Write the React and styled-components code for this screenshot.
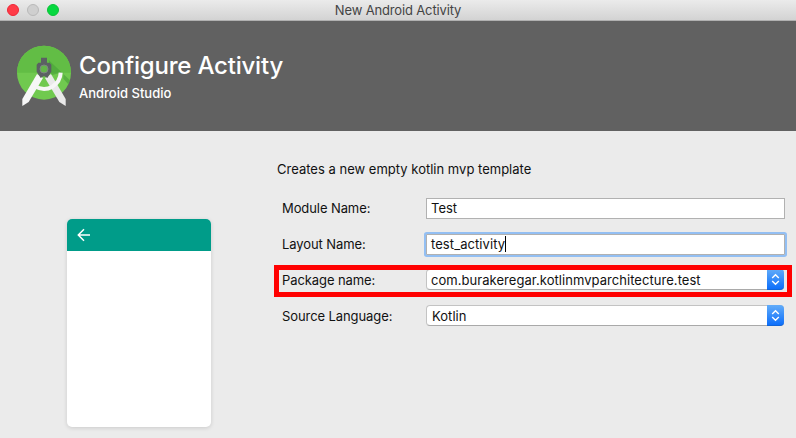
import React from "react";
import styled, { createGlobalStyle } from "styled-components";

const GlobalStyle = createGlobalStyle`
  * { box-sizing: border-box; }
  body { margin: 0; background: #ebebeb; overflow: hidden; }
`;

const Window = styled.div`
  width: 796px;
  height: 438px;
  overflow: hidden;
  background: #ebebeb;
  color: #111;
  font: 13px/20px Inter, "Liberation Sans", sans-serif;
  white-space: nowrap;
`;

const TitleBar = styled.header`
  height: 21px;
  display: grid;
  grid-template-columns: 72px 1fr 72px;
  align-items: center;
  background: linear-gradient(#ebebeb, #d3d3d3);
  border-bottom: 1px solid #b0b0b0;
`;

const Lights = styled.div`
  display: flex;
  gap: 8px;
  padding-left: 7px;
`;

const Light = styled.span`
  width: 12px;
  height: 12px;
  border-radius: 50%;
  background: ${(p) => p.$fill};
  border: 1px solid ${(p) => p.$edge};
`;

const WindowTitle = styled.div`
  text-align: center;
  color: #444;
  letter-spacing: -0.15px;
`;

const Banner = styled.div`
  height: 110px;
  padding: 17px 0 0 8px;
  display: flex;
  background: #616161;
  color: #fff;
`;

const Logo = styled.svg`
  width: 80px;
  height: 76px;
  margin-right: -9px;
  flex: none;
`;

const Heading = styled.h1`
  margin: 12px 0 0;
  font-size: 24px;
  line-height: 32px;
  font-weight: 500;
  letter-spacing: -0.2px;
`;

const Subheading = styled.div`
  font-weight: 500;
  line-height: 20px;
  margin-top: 1px;
`;

const Body = styled.main`
  display: flex;
  padding: 28px 0 0 67px;
`;

const Phone = styled.div`
  width: 144px;
  height: 208px;
  margin: 60px 66px 0 0;
  border-radius: 5px;
  overflow: hidden;
  background: #fff;
  box-shadow: 0 1px 4px rgba(0, 0, 0, 0.14);
`;

const PhoneBar = styled.div`
  height: 32px;
  padding: 9px 0 0 10px;
  background: #009c89;
  svg { display: block; }
`;

const Form = styled.div`
  width: 519px;
`;

const Description = styled.p`
  margin: 0;
  letter-spacing: 0.01px;
`;

const Row = styled.div`
  position: relative;
  height: 36px;
  padding-left: 5px;
  display: grid;
  grid-template-columns: 144px 359px;
  align-items: center;
`;

const Rows = styled.div`
  padding-top: 12px;
`;

const Label = styled.label`
  margin-bottom: 2px;
  letter-spacing: -0.09px;
`;

const TextField = styled.div`
  height: 21px;
  margin-bottom: 1px;
  display: flex;
  align-items: center;
  padding: 0 0 1px 4px;
  line-height: 18px;
  background: #fff;
  border: 1px solid #b1b1b1;
  border-radius: ${(p) => (p.$focused ? "1px" : "0")};
  box-shadow: ${(p) => (p.$focused ? "0 0 0 2px #93bff3" : "none")};
  letter-spacing: ${(p) => (p.$focused ? "0.08px" : "0")};
`;

const Caret = styled.span`
  width: 1px;
  height: 16px;
  background: #000;
`;

const Combo = styled.div`
  width: 358px;
  height: 21px;
  margin-bottom: 3px;
  display: flex;
  align-items: stretch;
  background: #fff;
  border: 1px solid #c3c3c3;
  border-bottom-color: #a9a9a9;
  border-radius: 4px;
`;

const ComboValue = styled.span`
  flex: 1;
  padding-left: ${(p) => p.$inset};
  line-height: 20px;
  letter-spacing: 0.05px;
`;

const Stepper = styled.span`
  width: 17px;
  margin: -1px;
  flex: none;
  display: flex;
  align-items: center;
  justify-content: center;
  background: linear-gradient(#62acf9, #0d6ffb);
  border-radius: 0 4px 4px 0;
  border-bottom: 1px solid #1064d8;
`;

const Highlight = styled.div`
  position: absolute;
  left: -3px;
  top: 2px;
  width: 518px;
  height: 32px;
  border: 5px solid #f00;
`;

function StudioLogo() {
  return (
    <Logo viewBox="0 0 240 228">
      <defs>
        <clipPath id="disc"><circle cx="108" cy="104" r="81" /></clipPath>
      </defs>
      <circle cx="108" cy="104" r="81" fill="#70c94f" />
      <g clipPath="url(#disc)">
        <path d="M20 20H200V104H20Z" fill="#62bd45" />
        <path d="M122 66L200 140V160L166 122V104H158L130 112Z" fill="#46a038" opacity=".6" />
      </g>
      <path d="M87 108L105 120L62 192L43 204L43 183Z" fill="#f7f7f7" />
      <path d="M129 108L111 120L154 192L173 204L173 183Z" fill="#e9e9e9" />
      <path d="M80 145Q108 160 133 146Q157 131 158 104" fill="none" stroke="#f6f6f6" strokeWidth="12" />
      <path d="M99 59H117V74H125L130 80V101L118 120L108 114L98 120L86 101V80L91 74H99Z" fill="#5b6063" />
      <circle cx="108" cy="93" r="12" fill="#63b449" stroke="#7d8583" strokeWidth="3" />
    </Logo>
  );
}

function Select({ children, inset = "4px" }) {
  return (
    <Combo>
      <ComboValue $inset={inset}>{children}</ComboValue>
      <Stepper>
        <svg width="9" height="13" viewBox="0 0 9 13" fill="none" stroke="#fff" strokeWidth="1.4">
          <path d="M1.2 4.9L4.5 1.7L7.8 4.9M1.2 8.1L4.5 11.3L7.8 8.1" />
        </svg>
      </Stepper>
    </Combo>
  );
}

export default function App() {
  return (
    <Window>
      <GlobalStyle />
      <TitleBar>
        <Lights>
          <Light $fill="#ff3b47" $edge="#ee2637" />
          <Light $fill="#cfcfcf" $edge="#b9b9b9" />
          <Light $fill="#06d83f" $edge="#0ac237" />
        </Lights>
        <WindowTitle>New Android Activity</WindowTitle>
      </TitleBar>
      <Banner>
        <StudioLogo />
        <div>
          <Heading>Configure Activity</Heading>
          <Subheading>Android Studio</Subheading>
        </div>
      </Banner>
      <Body>
        <Phone>
          <PhoneBar>
            <svg width="14" height="14" viewBox="0 0 14 14" fill="none" stroke="#fff" strokeWidth="1.5">
              <path d="M13 7H1.5M7 1.3L1.3 7L7 12.7" />
            </svg>
          </PhoneBar>
        </Phone>
        <Form>
          <Description>Creates a new empty kotlin mvp template</Description>
          <Rows>
            <Row>
              <Label>Module Name:</Label>
              <TextField>Test</TextField>
            </Row>
            <Row>
              <Label>Layout Name:</Label>
              <TextField $focused>test_activity<Caret /></TextField>
            </Row>
            <Row>
              <Label>Package name:</Label>
              <Select>com.burakeregar.kotlinmvparchitecture.test</Select>
              <Highlight />
            </Row>
            <Row>
              <Label>Source Language:</Label>
              <Select inset="5px">Kotlin</Select>
            </Row>
          </Rows>
        </Form>
      </Body>
    </Window>
  );
}
